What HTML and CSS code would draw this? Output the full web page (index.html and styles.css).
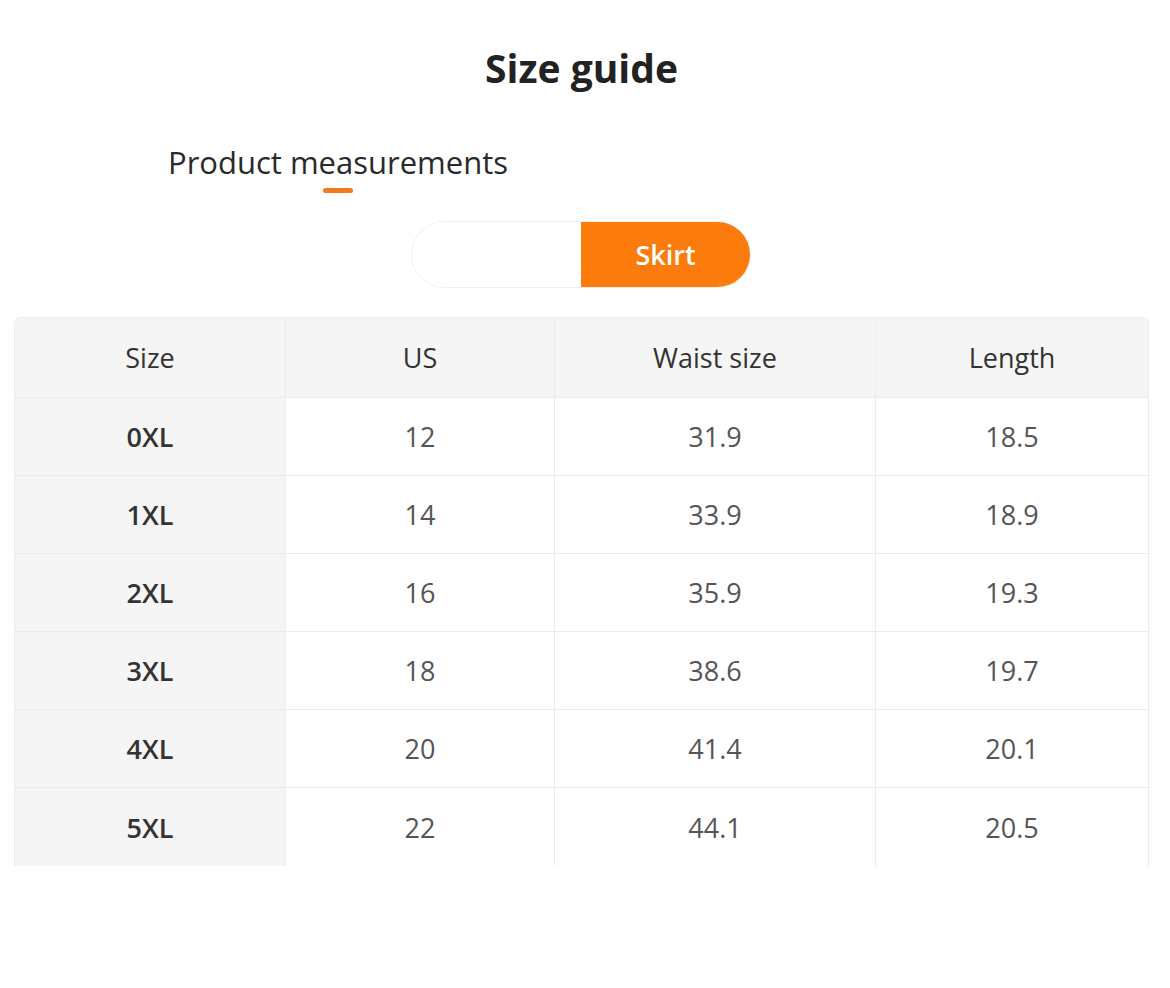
FILE: index.html
```html
<!DOCTYPE html>
<html>
<head>
<meta charset="utf-8">
<link rel="stylesheet" href="styles.css">
</head>
<body>
<div class="page">
  <h1 class="title">Size guide</h1>
  <div class="tabs">
    <div class="tab active">Product measurements</div>
  </div>
  <div class="switch">
    <div class="switch-opt"></div>
    <div class="switch-opt on">Skirt</div>
  </div>
  <table class="sizes">
    <thead>
      <tr><th>Size</th><th>US</th><th>Waist size</th><th>Length</th></tr>
    </thead>
    <tbody>
      <tr><th>0XL</th><td>12</td><td>31.9</td><td>18.5</td></tr>
      <tr><th>1XL</th><td>14</td><td>33.9</td><td>18.9</td></tr>
      <tr><th>2XL</th><td>16</td><td>35.9</td><td>19.3</td></tr>
      <tr><th>3XL</th><td>18</td><td>38.6</td><td>19.7</td></tr>
      <tr><th>4XL</th><td>20</td><td>41.4</td><td>20.1</td></tr>
      <tr><th>5XL</th><td>22</td><td>44.1</td><td>20.5</td></tr>
    </tbody>
  </table>
</div>
</body>
</html>
```
FILE: styles.css
```css
* { box-sizing: border-box; }
body {
  margin: 0;
  background: #fff;
  font-family: "Open Sans", "Noto Sans", sans-serif;
  color: #333;
}
.page {
  padding-top: 40px;
}
.title {
  margin: 0;
  text-align: center;
  font-size: 39px;
  font-weight: 700;
  line-height: 56px;
  color: #222;
  padding-right: 7px;
}
.tabs {
  display: flex;
  padding-left: 168px;
  margin-top: 46px;
}
.tab {
  font-size: 31px;
  line-height: 40px;
  color: #2a2a2a;
  position: relative;
  padding-bottom: 11px;
}
.tab.active::after {
  content: "";
  position: absolute;
  left: 50%;
  margin-left: -15px;
  bottom: 0;
  width: 30px;
  height: 5px;
  border-radius: 3px;
  background: #f07a1c;
}
.switch {
  display: flex;
  width: 340px;
  height: 67px;
  margin: 28px 0 0 411px;
  border-radius: 34px;
  overflow: hidden;
  border: 1px solid #f0f0f0;
}
.switch-opt {
  flex: 1;
  display: flex;
  align-items: center;
  justify-content: center;
  font-size: 27px;
  font-weight: 600;
  background: #fff;
}
.switch-opt.on {
  background: #fb7c0c;
  color: #fff;
}
.sizes {
  margin: 29px 0 0 14px;
  width: 1135px;
  border-collapse: separate;
  border-spacing: 0;
  table-layout: fixed;
  border-top: 1px solid #ececec;
  border-left: 1px solid #ececec;
  border-top-left-radius: 6px;
  border-top-right-radius: 6px;
  overflow: hidden;
}
.sizes th, .sizes td {
  text-align: center;
  font-size: 27px;
  height: 78px;
  border-right: 1px solid #ececec;
  border-bottom: 1px solid #ececec;
  padding: 0;
}
.sizes th:nth-child(1), .sizes td:nth-child(1) { width: 271px; }
.sizes th:nth-child(2), .sizes td:nth-child(2) { width: 269px; }
.sizes th:nth-child(3), .sizes td:nth-child(3) { width: 321px; }
.sizes thead th {
  background: #f5f5f5;
  font-weight: 500;
  color: #333;
  height: 80px;
}
.sizes tbody th {
  background: #f5f5f5;
  font-weight: 600;
  color: #333;
}
.sizes tbody td {
  background: #fff;
  color: #555;
  font-weight: 400;
}
.sizes tbody tr:last-child th,
.sizes tbody tr:last-child td {
  border-bottom: none;
}
```
